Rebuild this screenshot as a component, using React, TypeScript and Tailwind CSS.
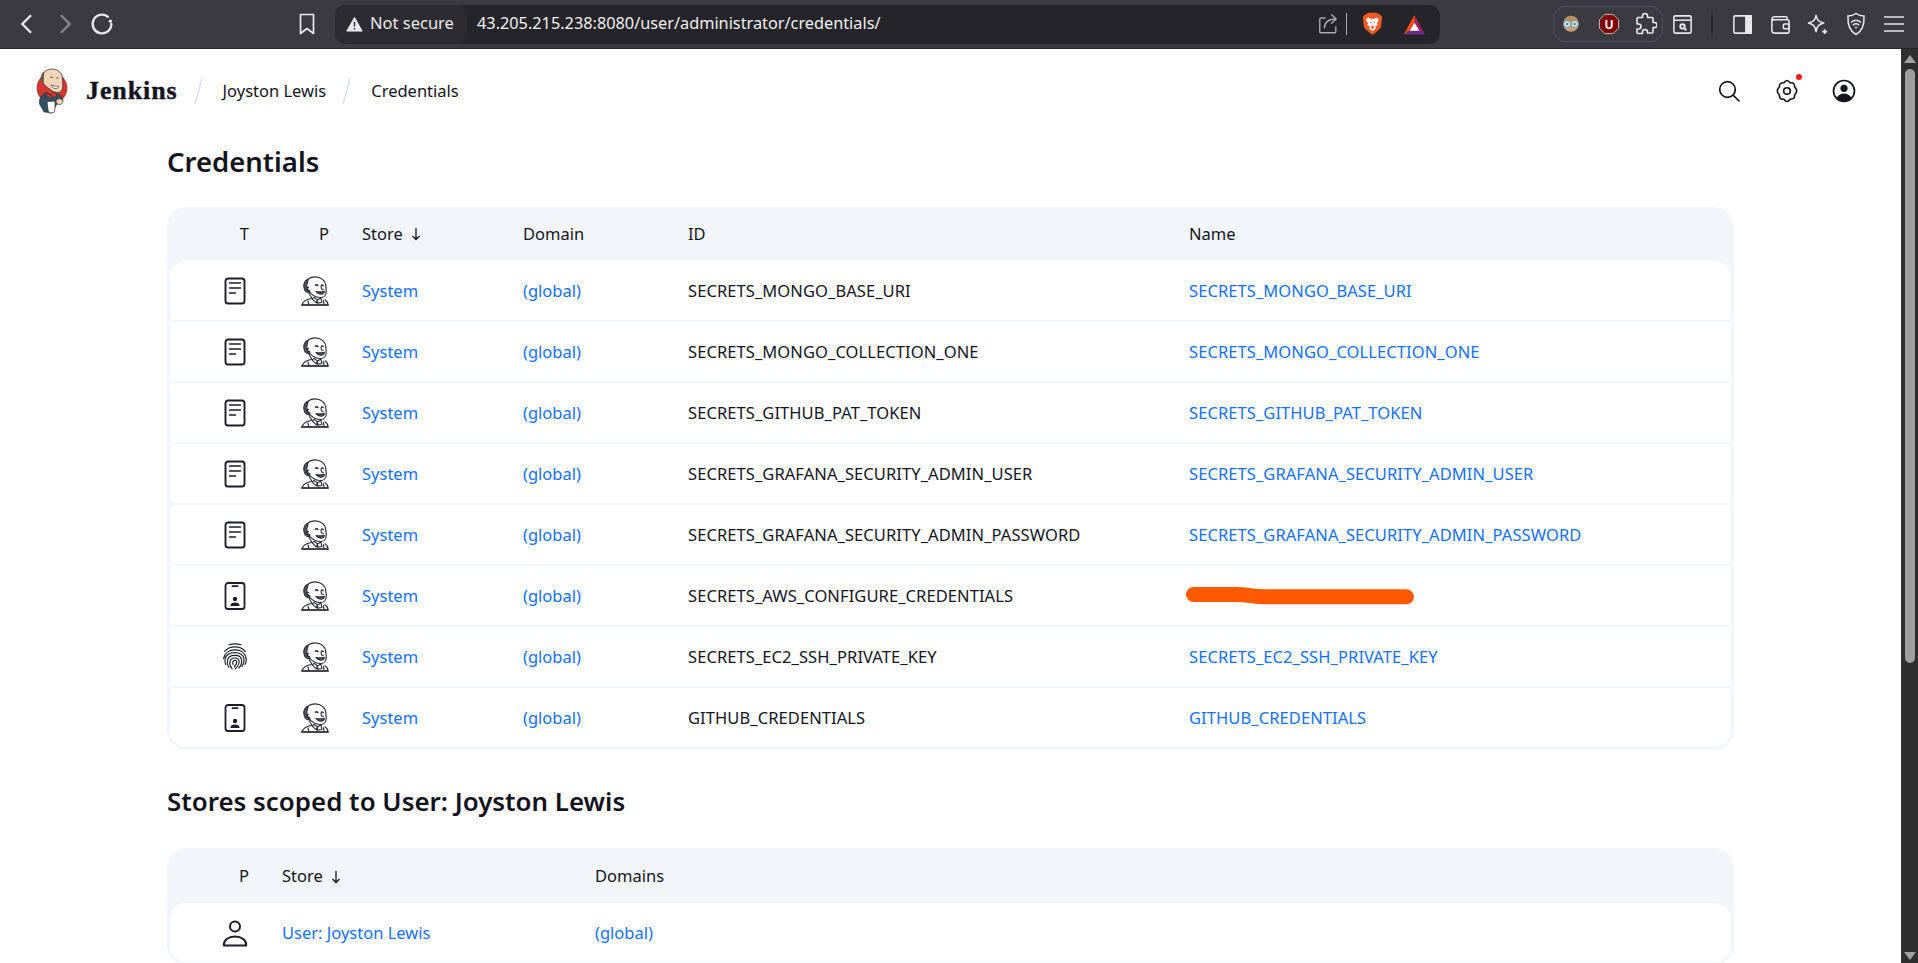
import React from "react";

const font = "font-['Noto_Sans','Liberation_Sans',sans-serif]";

function Jenkinshead({ className = "" }: { className?: string }) {
  return (
    <svg viewBox="0 0 28 30" className={className} fill="none" stroke="#2c2c38" strokeWidth="1.150" strokeLinecap="round" strokeLinejoin="round">
      <path d="M5 7.500C6 3 9.500.8 14 .8c6 0 10.500 3.700 10.800 9.200.1 2 .6 3.600.4 6-.2 3-2.200 5.500-5.200 5.500-3.800 0-8.500-1.800-11-5" fill="#fff" />
      <path d="M6.500 3.200C3.500 5 2.300 8 3 11.500c.4 2.500 1.700 4.500 3.500 5 1.200.3 2.300-.2 2.500-1.500-1.700-.5-2.500-1.500-3-3-.6-1.500-.5-3.500.5-5.500.3-.9.4-2 .1-3.300z" fill="#55555f" />
      <path d="M7.500 11.500c-1-.6-1.900.2-1.500 1.500.3 1 1 1.700 2 1.700" />
      <path d="M14.500 9.200c.8-.5 1.700-.4 2.400.3M20.500 9.200c.6-.3 1.200-.2 1.700.3" strokeWidth="1.500" />
      <path d="M20 10l.5 3 1.800.4" />
      <path d="M15 15.500c2 .5 4.500.6 8.300-.2.2 1.800-1.500 3-3.800 2.800-2-.2-3.500-1-4.500-2.600z" fill="#55555f" />
      <path d="M8 16.500c.4 2 1.200 3.500 2.500 4.800l-.3 1.500" />
      <path d="M10 22.500C6 23.300 2 24.800 1 29h26c-.2-2.500-1.300-4.200-3-5.200" fill="#fff" />
      <path d="M11 22.800l4.300 4 1.200-2.800-3.300-2.600zM16.500 24l3.400-2 1 4.500-4.400.6z" fill="#fff" />
      <path d="M1 29h26" strokeWidth="1.700" />
      <path d="M7 25l.8 3.500M22.500 24.500l.5 4" />
    </svg>
  );
}

function DocIcon() {
  return (
    <svg viewBox="0 0 28 28" className="w-7 h-7" fill="none" stroke="#1d1d2b" strokeLinecap="round" strokeLinejoin="round">
      <rect x="4.500" y="1.500" width="19" height="25" rx="2.600" strokeWidth="1.900" />
      <path d="M8.500 6h11M8.500 11h11M8.500 16h6" strokeWidth="1.500" />
    </svg>
  );
}

function BadgeIcon() {
  return (
    <svg viewBox="0 0 28 28" className="w-7 h-7" fill="none" stroke="#1d1d2b" strokeWidth="1.800" strokeLinecap="round" strokeLinejoin="round">
      <rect x="4.500" y="1" width="19" height="26" rx="2.600" />
      <path d="M11.500 4.200h5" />
      <circle cx="14" cy="17" r="2.200" fill="#1d1d2b" stroke="none" />
      <path d="M9.500 24v-.8c0-1.600 2-2.600 4.500-2.600s4.500 1 4.500 2.600v.8z" fill="#1d1d2b" stroke="none" />
    </svg>
  );
}

function FingerprintIcon() {
  return (
    <svg viewBox="0 0 28 28" className="w-7 h-7" fill="none" stroke="#1d1d2b" strokeWidth="1.150" strokeLinecap="round">
      <path d="M8 1.800c3.600-1.200 8.400-1.200 12 0" />
      <path d="M3.600 8.400C6.200 5.200 9.800 3.900 14 3.900s7.800 1.400 10.400 4.700" />
      <path d="M2.600 15.600C3.400 10 8 6.800 14 6.800s10.400 3.400 11.200 8.800c.3 2.200-.1 4-1.200 5.800" />
      <path d="M4.800 21.600c-1-1.900-1.100-3.900-.7-5.800C5 11.900 9 9.600 14 9.600c4.800 0 8.500 2.500 9 6.300.3 2.500-.3 5.100-2 7.500" />
      <path d="M7.800 24.200c-1.500-2.200-1.800-4.600-1.300-7C7.100 14.200 10 12.400 14 12.400c3.700 0 6.300 2 6.600 4.800.3 2.700-.7 5.600-2.800 7.800" />
      <path d="M11.200 26c-1.800-2.200-2.800-4.800-2.300-7.400.5-2.200 2.500-3.600 5.100-3.600 2.400 0 4 1.400 4.100 3.400.1 2.500-1.300 5.300-3.900 7.400" />
      <path d="M12.200 21.500c-.5-1.200-.6-2-.4-2.800.3-.8 1.100-1.300 2.200-1.300 1.100 0 1.800.7 1.700 1.700-.1 1.800-1 3.500-2.500 4.800" />
    </svg>
  );
}

function UserIcon() {
  return (
    <svg viewBox="0 0 28 28" className="w-7 h-7" fill="none" stroke="#1d1d2b" strokeWidth="2" strokeLinecap="round" strokeLinejoin="round">
      <circle cx="14" cy="7.400" r="5" />
      <path d="M2.800 26.500h22.400c.4-5.200-4.800-9-11.200-9s-11.600 3.800-11.200 9z" />
    </svg>
  );
}

function JenkinsLogo() {
  return (
    <svg viewBox="0 0 34 46" className="w-[34px] h-[46px]" fill="none">
      <ellipse cx="17" cy="20" rx="15" ry="15.500" fill="#d33833" stroke="#8c2320" strokeWidth="0.6" />
      <path d="M7 10C7 4 12 1 17.500 1c6 0 10 4.500 10 10 0 3 .6 6 .1 9-.5 3-3 5-6 4.500-3-.5-6-2-8-4.500-3-1-6.100-4.500-6.600-10z" fill="#f0d6b7" stroke="#231f20" strokeWidth="0.7" />
      <path d="M9 3.500C6.500 5 5.400 8 6 11.500c.3 1.800 1.300 3 2.600 3 .4-3 .5-7 .4-11z" fill="#5f5a59" />
      <path d="M15 9.500c1-.6 2-.5 2.600.2M21.500 10c.6-.3 1.200-.2 1.700.2" stroke="#231f20" strokeWidth="0.9" />
      <path d="M16 17c2 .7 4.500 1.400 7.500 1.300 0 1.800-1.500 2.700-3.500 2.200-2-.4-3.500-1.700-4-3.500z" fill="#fff" stroke="#231f20" strokeWidth="0.6" />
      <path d="M4.500 36c-.8-5 1.500-9 6.500-11.500l6 3 6-1.500c3 1.500 4.500 4 5 6.500l-2.500 3-3.500.5L17 45l-8-1z" fill="#335061" stroke="#231f20" strokeWidth="0.5" />
      <path d="M12 24.500l4 3.500 1.200-2.300 3.500-1.200.8 4-3.500.5-1-.8-2 1.800-3.400-2.500z" fill="#d33833" stroke="#231f20" strokeWidth="0.4" />
      <path d="M12 33.500l8-.5c.3 3.500.1 7.500-.5 11-1.800 1.200-4.500 1.200-6 .3-.7-3.500-1.400-7.300-1.500-10.800z" fill="#fff" stroke="#231f20" strokeWidth="0.7" />
      <path d="M21.500 32c1.500-1.500 4-1.500 5.500-.5s1 3.500-.5 4.500-3.500.5-4.500-.5-1.200-2.500-.5-3.500z" fill="#f0d6b7" stroke="#231f20" strokeWidth="0.6" />
    </svg>
  );
}

const C = "#e8e8ea";

function BrowserBar() {
  return (
    <div className="h-[49px] shrink-0 bg-[#3b3a41] border-b border-[#26252a] flex items-center text-[#e8e8ea]">
      <svg viewBox="0 0 24 24" className="w-7 h-7 ml-[13px]" fill="none" stroke={C} strokeWidth="2"><path d="M15.500 4.500 8 12l7.500 7.500" /></svg>
      <svg viewBox="0 0 24 24" className="w-7 h-7 ml-[10px]" fill="none" stroke="#86868b" strokeWidth="2"><path d="M8.500 4.500 16 12l-7.500 7.500" /></svg>
      <svg viewBox="0 0 24 24" className="w-7 h-7 ml-[9px]" fill="none" stroke={C} strokeWidth="2" strokeLinecap="round"><path d="M20 12a8 8 0 1 1-3-6.200" /><circle cx="19.200" cy="9.600" r="1.400" fill={C} stroke="none" /></svg>
      <svg viewBox="0 0 24 24" className="w-6 h-6 ml-[179px]" fill="none" stroke={C} strokeWidth="1.700" strokeLinejoin="round"><path d="M5.500 2.500h13v19L12 16.500l-6.500 5z" /></svg>
      <div className="ml-[16px] w-[1105px] h-[39px] rounded-[11px] bg-[#252429] flex items-center">
        <div className="w-[132px] h-[38px] rounded-[10px] bg-[#2c2b31] flex items-center pl-[11px] gap-[7px]">
          <svg viewBox="0 0 18 18" className="w-[17px] h-[17px]"><path d="M9 1.500 17.200 16H.8z" fill={C} stroke={C} strokeLinejoin="round" /><path d="M8.200 6h1.600l-.2 5.500H8.400zM8.200 12.600h1.600v1.600H8.200z" fill="#2c2b31" /></svg>
          <span className="text-[16.500px] leading-none whitespace-nowrap pb-[2px]">Not secure</span>
        </div>
        <span className="ml-[10px] text-[16.300px] leading-none text-[#f0f0f2] whitespace-nowrap pb-[2px]">43.205.215.238:8080/user/administrator/credentials/</span>
        <div className="ml-auto flex items-center">
          <svg viewBox="0 0 24 24" className="w-[22px] h-[22px]" fill="none" stroke="#a9a9ae" strokeWidth="1.500" strokeLinecap="round" strokeLinejoin="round"><path d="M9 5.500H4.500a1.500 1.500 0 0 0-1.500 1.500v13.500a1 1 0 0 0 1 1h15.500a1 1 0 0 0 1-1V15" /><path d="M8 16c.4-5.500 4-9.500 13-9.500M16 1.800l5 4.700-5 4.700" /></svg>
          <div className="w-px h-[22px] bg-[#a9a9ae] ml-[7px]" />
          <svg viewBox="0 0 24 28" className="w-[21px] h-[25px] ml-[15px]"><path d="M3.500 2.500 8 .5h8l4.500 2L23 5l-1 10.500c-.4 2.500-2 4-4 5.500l-6 5-6-5c-2-1.500-3.600-3-4-5.500L1 5z" fill="#f15a22" /><path d="M7 6l3 1.500h4L17 6l2.500 2.500-2.500 4 1 2-3 2 1 2-4 3-4-3 1-2-3-2 1-2-2.500-4z" fill="#fff" opacity=".95" /><path d="M9 11h2l-1 1.500zM13 11h2l-1 1.500zM10 16.500l2-1 2 1-2 3z" fill="#f15a22" /></svg>
          <svg viewBox="0 0 26 24" className="w-[23px] h-[21px] ml-[20px] mr-[14px]"><path d="M13 1 1 23h24z" fill="#9e1f63" /><path d="M13 1 1 23l6-4 6-10z" fill="#ff5000" /><path d="M13 1 25 23l-6-4H7l-6 4h24z" fill="#662d91" /><path d="M13 10l5.500 9h-11z" fill="#fff" /></svg>
        </div>
      </div>
      <div className="ml-[113px] w-[110px] h-[36px] rounded-[13px] border border-[#515058] flex items-center">
        <svg viewBox="0 0 24 24" className="w-[22px] h-[22px] ml-[6px]"><circle cx="12" cy="12" r="8.500" fill="#c69c7a" /><path d="M4 10C5 4 9 3 12 3s7 1 8 7l-3-1H7z" fill="#b68d62" /><circle cx="7.800" cy="12" r="3.600" fill="#cfe8ea" stroke="#6aa9b5" strokeWidth="1" /><circle cx="16.200" cy="12" r="3.600" fill="#cfe8ea" stroke="#6aa9b5" strokeWidth="1" /><circle cx="8" cy="12" r="1.100" fill="#384a52" /><circle cx="16" cy="12" r="1.100" fill="#384a52" /></svg>
        <svg viewBox="0 0 24 24" className="w-[22px] h-[22px] ml-[16px]"><path d="M7.500 1.500h9l6 6v9l-6 6h-9l-6-6v-9z" fill="#800000" stroke="#ccc" strokeWidth="1" /><text x="12" y="17" textAnchor="middle" fontSize="13" fontWeight="700" fill="#fff" fontFamily="Liberation Sans">U</text></svg>
        <svg viewBox="0 0 24 24" className="w-6 h-6 ml-[13px]" fill="none" stroke={C} strokeWidth="1.600" strokeLinejoin="round"><path d="M9.500 5.500V4a2.500 2.500 0 0 1 5 0v1.500H19a1 1 0 0 1 1 1v4h1.500a2.500 2.500 0 0 1 0 5H20v4.500a1 1 0 0 1-1 1h-4.500V20a2.500 2.500 0 0 0-5 0v1.500H5a1 1 0 0 1-1-1V17h1.500a2.500 2.500 0 0 0 0-5H4V6.500a1 1 0 0 1 1-1z" /></svg>
      </div>
      <svg viewBox="0 0 24 24" className="w-[23px] h-[23px] ml-[8px]" fill="none" stroke={C} strokeWidth="1.600"><rect x="3" y="3" width="18" height="18" rx="1.500" /><path d="M3 7.500h18" /><circle cx="12" cy="14" r="2.300" strokeWidth="2" /><path d="M14 16l2 2" strokeWidth="2" /></svg>
      <div className="w-[2px] h-[22px] bg-[#2a292e] ml-[17px]" />
      <svg viewBox="0 0 24 24" className="w-[23px] h-[23px] ml-[18px]" fill="none" stroke={C} strokeWidth="1.600"><rect x="3" y="3" width="18" height="18" rx="1.500" /><path d="M15.500 3H21v18h-5.500z" fill={C} /></svg>
      <svg viewBox="0 0 24 24" className="w-[23px] h-[23px] ml-[15px]" fill="none" stroke={C} strokeWidth="1.600"><path d="M3 6.500A2.500 2.500 0 0 1 5.500 4h12A1.500 1.500 0 0 1 19 5.500V7H5.500A2.500 2.500 0 0 1 3 6.500zm0 0V18a3 3 0 0 0 3 3h13a2 2 0 0 0 2-2V9a2 2 0 0 0-2-2" /><rect x="15" y="11.500" width="6" height="5" rx="1" /></svg>
      <svg viewBox="0 0 24 24" className="w-[23px] h-[23px] ml-[14px]" fill="none" stroke={C} strokeWidth="1.600" strokeLinejoin="round"><path d="M10.500 2.500c1 5 2.500 6.500 8 8-5.500 1.500-7 3-8 9-1-6-2.500-7.500-8-9 5.500-1.500 7-3 8-8z" /><path d="M19.500 17v5M17 19.500h5" strokeWidth="1.800" /></svg>
      <svg viewBox="0 0 24 24" className="w-[24px] h-[24px] ml-[15px]" fill="none" stroke={C} strokeWidth="1.500" strokeLinecap="round"><path d="M12 1.500c2.500 1.800 5 2.500 8 2.500.5 8.500-1.500 15-8 18.500C5.500 19 3.500 12.500 4 4c3 0 5.500-.7 8-2.500z" /><path d="M7.500 10c2.700-2 6.300-2 9 0M9.300 12.800c1.700-1.200 3.700-1.200 5.400 0" /><circle cx="12" cy="15.500" r="1" fill={C} stroke="none" /></svg>
      <svg viewBox="0 0 24 24" className="w-[24px] h-[24px] ml-[14px]" fill="none" stroke={C} strokeWidth="1.700"><path d="M2 5h20M2 12h20M2 19h20" /></svg>
    </div>
  );
}

function Th({ children, right }: { children: React.ReactNode; right?: boolean }) {
  return <div className={right ? "text-right pr-[4px]" : "pl-[29px]"}>{children}</div>;
}

function Sorted({ children }: { children: React.ReactNode }) {
  return (
    <span className="inline-flex items-center gap-[7px]">
      {children}
      <svg viewBox="0 0 12 14" className="w-3 h-[14px]" fill="none" stroke="#14141f" strokeWidth="1.300"><path d="M6 1v11.500M2.500 9 6 12.500 9.500 9" /></svg>
    </span>
  );
}

const rows: { id: string; name: string; icon: "doc" | "badge" | "print"; hidden?: boolean }[] = [
  { id: "SECRETS_MONGO_BASE_URI", name: "SECRETS_MONGO_BASE_URI", icon: "doc" },
  { id: "SECRETS_MONGO_COLLECTION_ONE", name: "SECRETS_MONGO_COLLECTION_ONE", icon: "doc" },
  { id: "SECRETS_GITHUB_PAT_TOKEN", name: "SECRETS_GITHUB_PAT_TOKEN", icon: "doc" },
  { id: "SECRETS_GRAFANA_SECURITY_ADMIN_USER", name: "SECRETS_GRAFANA_SECURITY_ADMIN_USER", icon: "doc" },
  { id: "SECRETS_GRAFANA_SECURITY_ADMIN_PASSWORD", name: "SECRETS_GRAFANA_SECURITY_ADMIN_PASSWORD", icon: "doc" },
  { id: "SECRETS_AWS_CONFIGURE_CREDENTIALS", name: "", icon: "badge", hidden: true },
  { id: "SECRETS_EC2_SSH_PRIVATE_KEY", name: "SECRETS_EC2_SSH_PRIVATE_KEY", icon: "print" },
  { id: "GITHUB_CREDENTIALS", name: "GITHUB_CREDENTIALS", icon: "badge" },
];

const link = "text-[#1470ff]";
const cols = "grid grid-cols-[83px_80px_160px_165px_501px_1fr] items-center";

function Scribble() {
  return (
    <svg viewBox="0 0 228 18" className="w-[228px] h-[18px] block" fill="none">
      <path d="M7.500 7.500h42c14 0 16 2.300 30 2.300h141" stroke="#ff5a00" strokeWidth="15" strokeLinecap="round" strokeLinejoin="round" />
    </svg>
  );
}

export default function App() {
  return (
    <div className={`${font} w-[1918px] h-[963px] overflow-hidden flex flex-col bg-white text-[#14141f] text-[16.500px]`}>
      <BrowserBar />
      <div className="flex flex-1 min-h-0">
        <main className="flex-1 min-w-0 overflow-hidden">
          <header className="h-[83px] flex items-center pl-[35px]">
            <JenkinsLogo />
            <span className="ml-[17px] font-['Liberation_Serif',serif] font-bold text-[26px] tracking-[0.9px] [-webkit-text-stroke:0.4px_#14141f]">Jenkins</span>
            <span className="ml-[20px] w-px h-[26px] bg-[#cbd5e6] rotate-[15deg]" />
            <span className="ml-[24px] pt-[2px]">Joyston Lewis</span>
            <span className="ml-[20px] w-px h-[26px] bg-[#cbd5e6] rotate-[15deg]" />
            <span className="ml-[24px] pt-[2px]">Credentials</span>
            <div className="ml-auto mr-[45px] flex items-center">
              <svg viewBox="0 0 24 24" className="w-6 h-6" fill="none" stroke="#14141f" strokeWidth="1.700" strokeLinecap="round"><circle cx="10.500" cy="10.500" r="7.800" /><path d="m16.500 16.500 5.500 5.500" /></svg>
              <div className="relative ml-[34px]">
                <svg viewBox="0 0 24 24" className="w-6 h-6 block" fill="none" stroke="#14141f" strokeWidth="1.600" strokeLinejoin="round"><path d="M12 1.500c1.500 0 2.200 1 3 2.200 1.300.1 2.600 0 3.700 1 1 1 .9 2.400 1 3.500 1 .9 2 1.900 2 3.800s-1 2.900-2 3.800c-.1 1.100 0 2.500-1 3.500s-2.400.9-3.700 1c-.8 1.200-1.500 2.200-3 2.200s-2.200-1-3-2.200c-1.300-.1-2.600 0-3.700-1-1-1-.9-2.400-1-3.500-1-.9-2-1.900-2-3.800s1-2.900 2-3.800c.1-1.100 0-2.500 1-3.500s2.400-.9 3.700-1c.8-1.200 1.500-2.200 3-2.200z" /><circle cx="12" cy="12" r="3.300" /></svg>
                <span className="absolute -top-[5px] -right-[3px] w-[6px] h-[6px] rounded-full bg-[#ff1a1a]" />
              </div>
              <svg viewBox="0 0 24 24" className="w-6 h-6 ml-[33px]"><circle cx="12" cy="12" r="10.500" fill="none" stroke="#14141f" strokeWidth="1.700" /><circle cx="12" cy="9.300" r="3.600" fill="#14141f" /><path d="M4.500 19c1.500-3 4.500-4.500 7.500-4.500s6 1.500 7.500 4.500a10.500 10.500 0 0 1-15 0z" fill="#14141f" /></svg>
            </div>
          </header>
          <div className="px-[167px]">
            <h1 className="text-[27.500px] leading-[36px] font-semibold mt-[12px]">Credentials</h1>
            <section className="mt-[27px] rounded-[20px] bg-[#f2f5f9] px-[3px] pb-[3px]">
              <div className={`${cols} h-[54px]`}>
                <Th right>T</Th>
                <Th right>P</Th>
                <Th><Sorted>Store</Sorted></Th>
                <div className="pl-[30px]">Domain</div>
                <div className="pl-[30px]">ID</div>
                <div className="pl-[30px]">Name</div>
              </div>
              <div className="flex flex-col gap-[2px]">
                {rows.map((r, i) => (
                  <div key={r.id} className={`${cols} h-[59px] bg-white rounded-[4px] ${i === 0 ? "rounded-t-[16px]" : ""} ${i === rows.length - 1 ? "rounded-b-[16px]" : ""}`}>
                    <div className="flex justify-end pr-[4px]">
                      {r.icon === "doc" ? <DocIcon /> : r.icon === "badge" ? <BadgeIcon /> : <FingerprintIcon />}
                    </div>
                    <div className="flex justify-end pr-[4px]"><Jenkinshead className="w-7 h-[30px]" /></div>
                    <div className={`pl-[29px] pt-[2px] ${link}`}>System</div>
                    <div className={`pl-[30px] pt-[2px] ${link}`}>(global)</div>
                    <div className="pl-[30px] pt-[2px] whitespace-nowrap tracking-[0.08px]">{r.id}</div>
                    <div className={`pl-[27px] whitespace-nowrap tracking-[0.08px] ${link}`}>
                      {r.hidden ? <Scribble /> : <span className="pl-[3px] pt-[2px] block">{r.name}</span>}
                    </div>
                  </div>
                ))}
              </div>
            </section>
            <h2 className="text-[25.900px] leading-[36px] font-semibold mt-[33px]">Stores scoped to User: Joyston Lewis</h2>
            <section className="mt-[29px] rounded-[20px] bg-[#f2f5f9] px-[3px] pb-[3px]">
              <div className="grid grid-cols-[83px_312px_1fr] items-center h-[55px] pt-[2px]">
                <Th right>P</Th>
                <div className="pl-[29px]"><Sorted>Store</Sorted></div>
                <div className="pl-[30px]">Domains</div>
              </div>
              <div className="grid grid-cols-[83px_312px_1fr] items-center h-[59px] bg-white rounded-[16px]">
                <div className="flex justify-end pr-[4px]"><UserIcon /></div>
                <div className={`pl-[29px] pt-[2px] ${link}`}>User: Joyston Lewis</div>
                <div className={`pl-[30px] pt-[2px] ${link}`}>(global)</div>
              </div>
            </section>
          </div>
        </main>
        <aside className="w-[17px] shrink-0 bg-[#2e2e2e] flex flex-col items-center justify-between pt-[6px] pb-[3px]">
          <div className="flex flex-col items-center gap-[6px] w-full">
            <svg viewBox="0 0 12 8" className="w-3 h-2"><path d="M6 0l6 8H0z" fill="#a0a0a0" /></svg>
            <div className="w-[10px] h-[594px] rounded-full bg-[#9e9e9e]" />
          </div>
          <svg viewBox="0 0 12 8" className="w-3 h-2"><path d="M6 8 12 0H0z" fill="#a0a0a0" /></svg>
        </aside>
      </div>
    </div>
  );
}
